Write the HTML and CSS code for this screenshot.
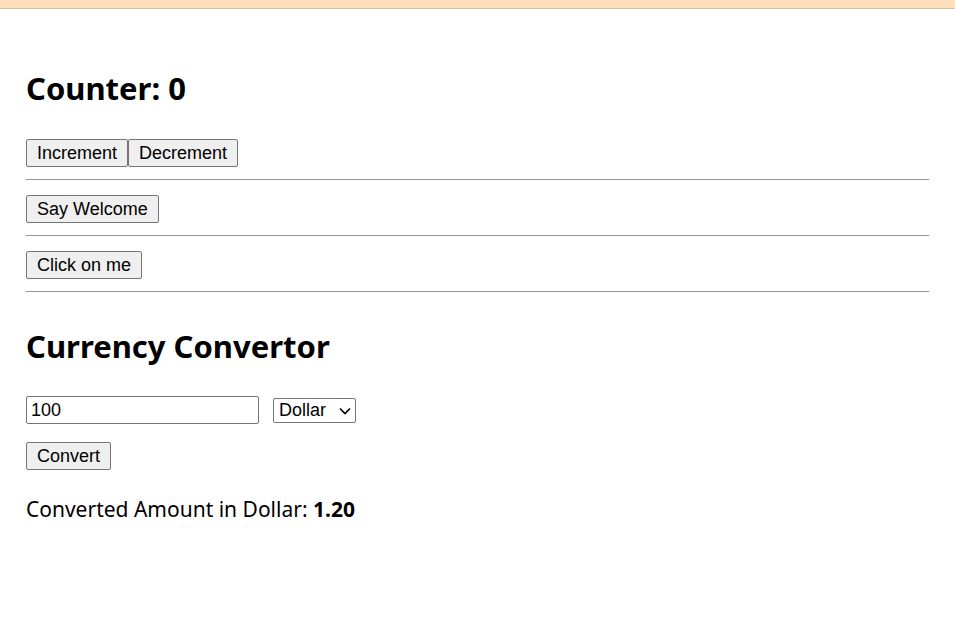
FILE: index.html
```html
<!DOCTYPE html>
<html>
<head>
<meta charset="utf-8">
<link rel="stylesheet" href="styles.css">
</head>
<body>
<div class="topbar"></div>
<main class="app">
  <section class="counter">
    <h1 class="title">Counter: 0</h1>
    <div class="btn-row"><button class="btn">Increment</button><button class="btn">Decrement</button></div>
  </section>
  <hr class="rule">
  <div class="btn-row"><button class="btn">Say Welcome</button></div>
  <hr class="rule">
  <div class="btn-row"><button class="btn">Click on me</button></div>
  <hr class="rule">
  <section class="currency">
    <h1 class="title">Currency Convertor</h1>
    <div class="form-row">
      <input class="amount" type="text" value="100">
      <div class="select-wrap">
        <select class="unit"><option>Dollar</option><option>Euro</option></select>
        <svg class="chevron" width="12" height="8" viewBox="0 0 12 8"><path d="M1 1.5 L6 6.5 L11 1.5" fill="none" stroke="#000" stroke-width="1.6"/></svg>
      </div>
    </div>
    <div class="btn-row"><button class="btn">Convert</button></div>
    <p class="result">Converted Amount in Dollar: <strong>1.20</strong></p>
  </section>
</main>
</body>
</html>
```
FILE: styles.css
```css
html, body {
  margin: 0;
  padding: 0;
  background: #ffffff;
}
body {
  font-family: "Noto Sans", "Open Sans", sans-serif;
  color: #000;
}
.topbar {
  height: 8px;
  background: #ffdfbb;
  border-bottom: 1px solid #d9bc98;
}
.app {
  padding: 0 26px;
}
.title {
  font-size: 31px;
  font-weight: 700;
  margin: 0;
  line-height: 40px;
}
.counter {
  padding-top: 59px;
}
.counter .title {
  margin-bottom: 31px;
}
.btn-row {
  display: flex;
}
.btn {
  font-family: "Liberation Sans", Arial, sans-serif;
  font-size: 18px;
  line-height: 20px;
  height: 28px;
  box-sizing: border-box;
  padding: 3px 10px;
  background: #efefef;
  border: 1px solid #767676;
  border-radius: 2px;
  color: #000;
  margin: 0;
}
.rule {
  border: 0;
  border-top: 1px solid #999;
  margin: 12px 0 15px;
  height: 0;
}
.currency .title {
  margin-top: 34px;
  margin-bottom: 30px;
}
.form-row {
  display: flex;
  align-items: center;
  gap: 14px;
  margin-bottom: 18px;
}
.amount {
  font-family: "Liberation Sans", Arial, sans-serif;
  font-size: 18px;
  width: 233px;
  height: 28px;
  box-sizing: border-box;
  padding: 1px 4px;
  border: 1px solid #767676;
  border-radius: 2px;
  margin: 0;
}
.select-wrap {
  position: relative;
  display: flex;
}
.unit {
  appearance: none;
  -webkit-appearance: none;
  font-family: "Liberation Sans", Arial, sans-serif;
  font-size: 18px;
  line-height: 21px;
  width: 83px;
  height: 25px;
  box-sizing: border-box;
  padding: 0 0 0 5px;
  border: 1px solid #767676;
  border-radius: 2px;
  background: #fff;
  color: #000;
  margin: 0;
}
.chevron {
  position: absolute;
  right: 5px;
  top: 9px;
  pointer-events: none;
}
.result {
  font-size: 21px;
  margin: 25px 0 0;
}
.result strong {
  font-weight: 700;
}
```
